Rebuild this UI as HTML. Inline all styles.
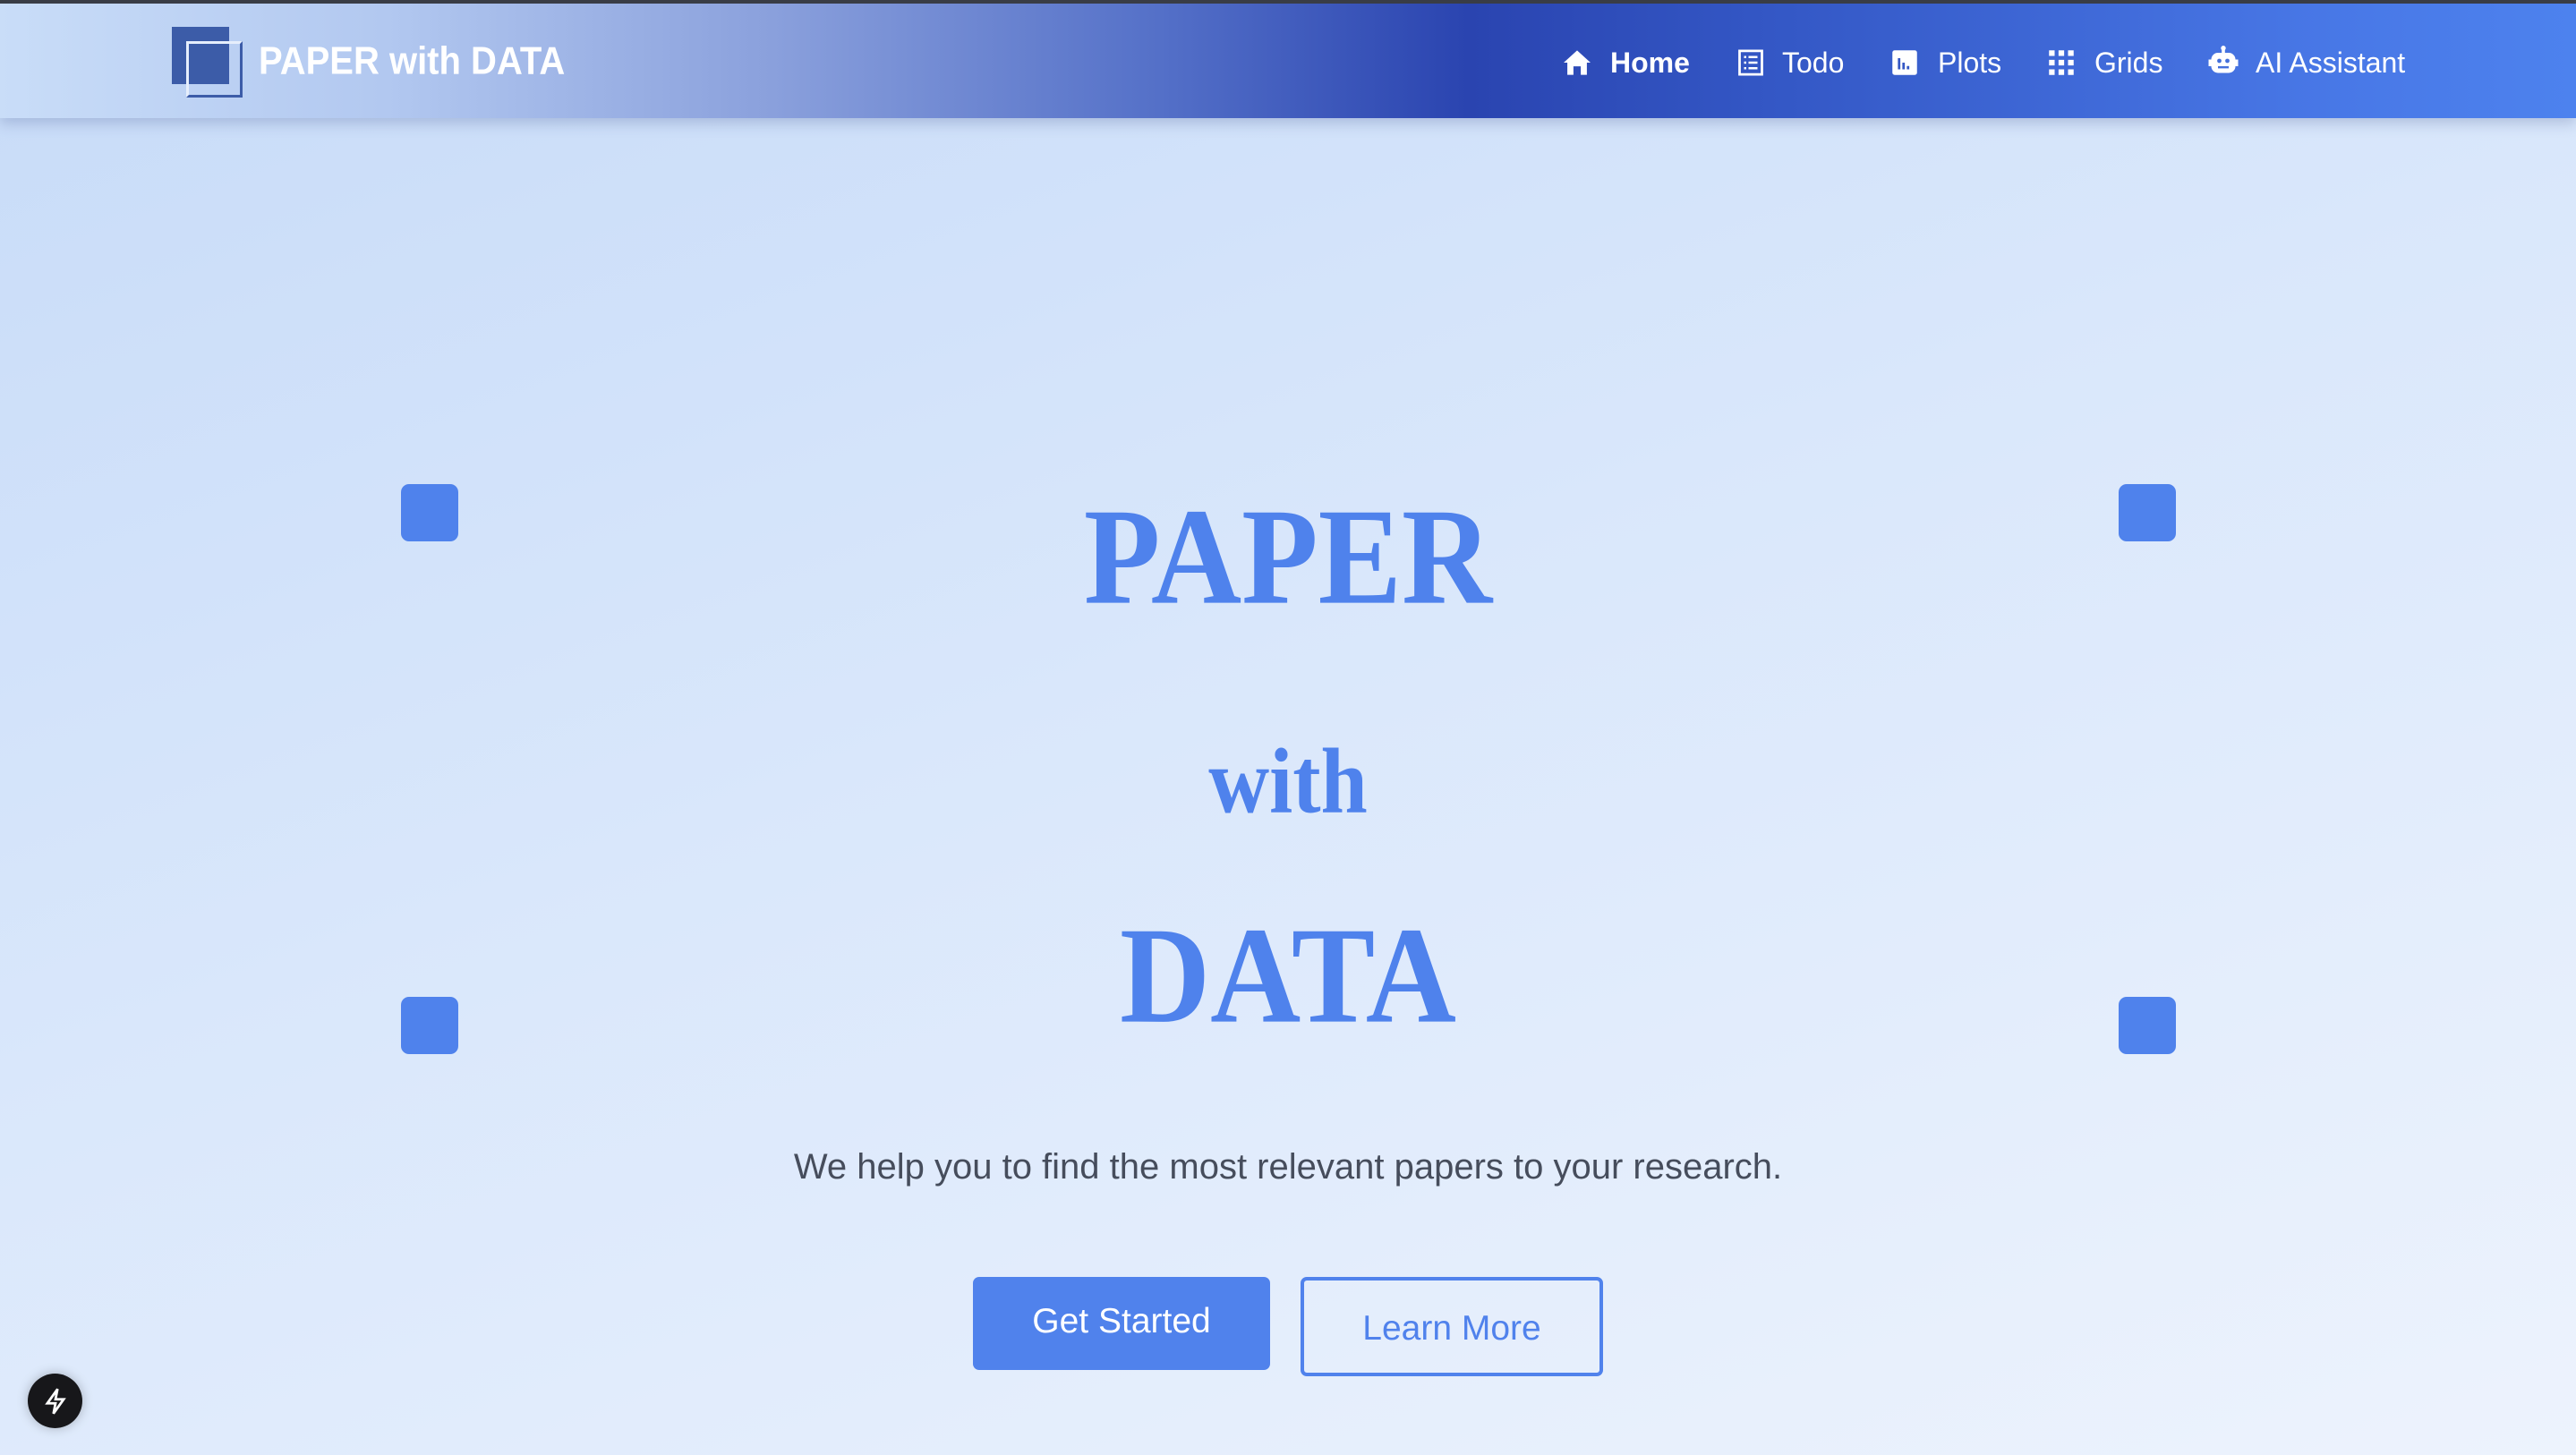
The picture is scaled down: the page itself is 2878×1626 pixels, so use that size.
<!DOCTYPE html>
<html><head><meta charset="utf-8"><style>
*{margin:0;padding:0;box-sizing:border-box}
html,body{width:2878px;height:1626px;overflow:hidden}
body{font-family:"Liberation Sans",Arial,sans-serif;background:linear-gradient(160deg,#c7dbf8 0%,#d9e7fb 45%,#edf3fd 100%);position:relative}
.top{position:absolute;left:0;top:0;width:2878px;height:4px;background:#3a3d44}
.nav{position:absolute;left:0;top:4px;width:2878px;height:128px;background:linear-gradient(90deg,#c9ddf8 0%,#b2c8f0 15%,#8aa0dc 30%,#5470c8 45%,#2a44b0 57%,#3356c4 68%,#4877e6 90%,#4d82ee 100%);box-shadow:0 6px 14px rgba(60,80,140,.25)}
.lg1{position:absolute;left:192px;top:26px;width:64px;height:64px;background:#3c5ca8}
.lg2{position:absolute;left:208px;top:42px;width:63px;height:63px;border:3px solid #3c5ca8;border-top-color:#e6eefc;border-left-color:#e6eefc}
.brand{position:absolute;left:289px;font-size:40px;font-weight:bold;color:#fff;line-height:1;transform:scaleY(1.1);transform-origin:left bottom}
.ni{position:absolute;top:54px;font-size:32px;color:#fff;line-height:1}
.ic{position:absolute;top:55px}
.sq{position:absolute;width:64px;height:64px;border-radius:9px;background:#4f82ec}
.t{position:absolute;left:0;width:2878px;text-align:center;font-family:"Liberation Serif","Times New Roman",serif;font-weight:bold;color:#4f82ec;line-height:1;transform:scaleY(1.1);transform-origin:center bottom}
.sub{position:absolute;left:0;width:2878px;text-align:center;top:1284px;font-size:40px;color:#464d5c;line-height:1}
.b1{position:absolute;left:1087px;top:1427px;width:332px;height:104px;border-radius:7px;background:#5082ec;color:#fff;font-size:39px;text-align:center;line-height:100px}
.b2{position:absolute;left:1453px;top:1427px;width:338px;height:111px;border-radius:7px;border:4px solid #5082ec;color:#5082ec;font-size:39px;text-align:center;line-height:108px}
.fab{position:absolute;left:31px;top:1535px;width:61px;height:61px;border-radius:50%;background:#17171a;box-shadow:0 0 12px rgba(0,0,0,.25)}
</style></head><body>
<div class="top"></div>
<div class="nav">
<div class="lg1"></div><div class="lg2"></div>
</div>
<div class="brand" style="top:50px">PAPER with DATA</div>

<svg class="ic" style="left:1745px" width="34" height="30" viewBox="0 0 24 22"><path d="M12 1 L1 11 H4 V21 H9 V14 H15 V21 H20 V11 H23 Z" fill="#fff"/></svg>
<div class="ni" style="left:1799px;font-weight:bold">Home</div>

<svg class="ic" style="left:1941px" width="30" height="30" viewBox="0 0 24 24"><rect x="2" y="1.5" width="20" height="21" fill="none" stroke="#fff" stroke-width="2.2"/><path d="M6 7h2M10 7h8M6 12h2M10 12h8M6 17h2M10 17h8" stroke="#fff" stroke-width="2"/></svg>
<div class="ni" style="left:1991px">Todo</div>

<svg class="ic" style="left:2113px" width="30" height="30" viewBox="0 0 24 24"><rect x="1" y="1" width="22" height="22" rx="2" fill="#fff"/><path d="M7 8v10M11 12v6M15 15v3" stroke="#3558c4" stroke-width="2.2"/></svg>
<div class="ni" style="left:2165px">Plots</div>

<svg class="ic" style="left:2288px" width="30" height="30" viewBox="0 0 24 24" fill="#fff"><rect x="1" y="1" width="5" height="5"/><rect x="9.5" y="1" width="5" height="5"/><rect x="18" y="1" width="5" height="5"/><rect x="1" y="9.5" width="5" height="5"/><rect x="9.5" y="9.5" width="5" height="5"/><rect x="18" y="9.5" width="5" height="5"/><rect x="1" y="18" width="5" height="5"/><rect x="9.5" y="18" width="5" height="5"/><rect x="18" y="18" width="5" height="5"/></svg>
<div class="ni" style="left:2340px">Grids</div>

<svg class="ic" style="left:2466px;top:50px" width="36" height="36" viewBox="0 0 24 24"><circle cx="12" cy="2.5" r="1.8" fill="#fff"/><rect x="10.8" y="3" width="2.4" height="3" fill="#fff"/><rect x="3" y="6" width="18" height="15" rx="5" fill="#fff"/><rect x="1" y="11" width="3" height="5" fill="#fff"/><rect x="20" y="11" width="3" height="5" fill="#fff"/><circle cx="9" cy="12" r="1.6" fill="#4470dc"/><circle cx="15" cy="12" r="1.6" fill="#4470dc"/><rect x="8" y="16" width="8" height="1.6" fill="#4470dc"/></svg>
<div class="ni" style="left:2520px">AI Assistant</div>

<div class="sq" style="left:448px;top:541px"></div>
<div class="sq" style="left:2367px;top:541px"></div>
<div class="sq" style="left:448px;top:1114px"></div>
<div class="sq" style="left:2367px;top:1114px"></div>

<div class="t" style="top:560px;font-size:140px">PAPER</div>
<div class="t" style="top:831px;font-size:94px">with</div>
<div class="t" style="top:1028px;font-size:140px">DATA</div>

<div class="sub">We help you to find the most relevant papers to your research.</div>
<div class="b1">Get Started</div>
<div class="b2">Learn More</div>

<div class="fab"><svg style="position:absolute;left:17px;top:15px" width="28" height="32" viewBox="0 0 24 28"><path d="M14 2 L4 16 H12 L10 26 L20 12 H12 Z" fill="none" stroke="#fff" stroke-width="2.4" stroke-linejoin="miter"/></svg></div>
</body></html>
